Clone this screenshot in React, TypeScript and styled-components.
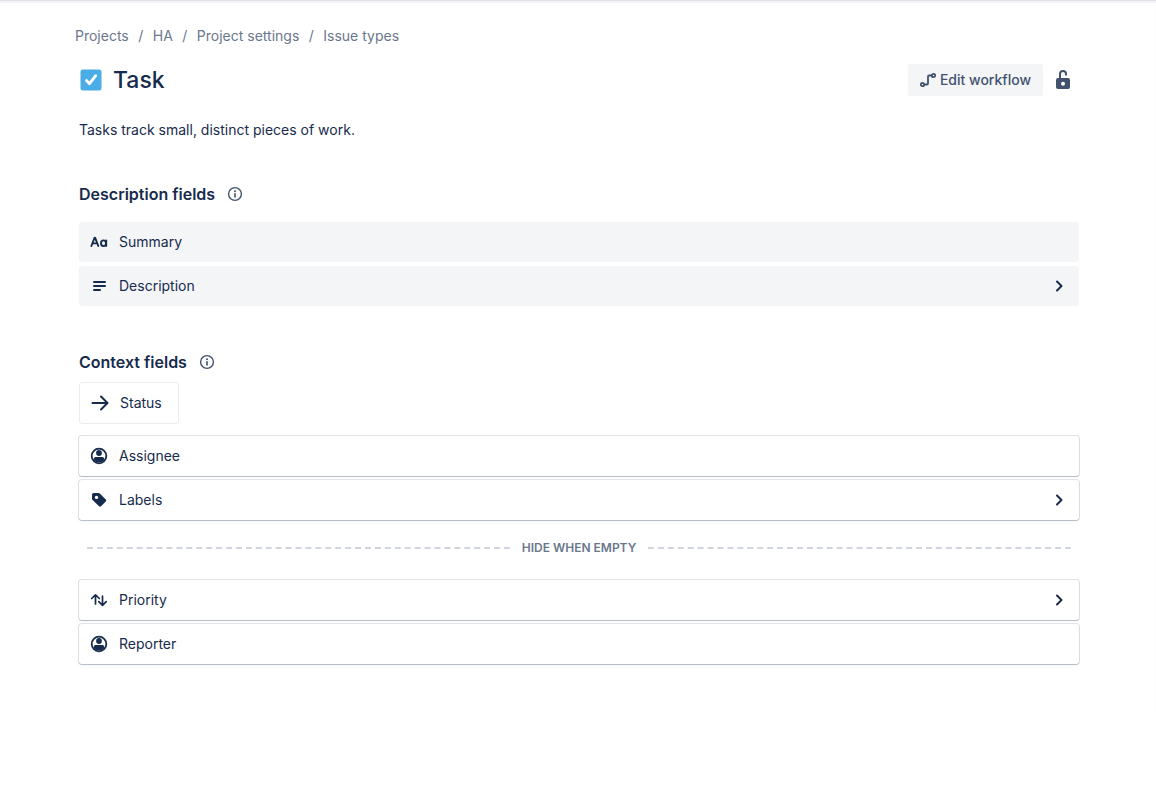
import React from "react";
import styled, { createGlobalStyle } from "styled-components";

const color = {
  text: "#172b4d",
  subtle: "#6b778c",
  icon: "#42526e",
  surface: "#f4f5f7",
  line: "#ebecf0",
};

const GlobalStyle = createGlobalStyle`
  *, *::before, *::after { box-sizing: border-box; }
  body {
    margin: 0;
    background: #fff;
    color: ${color.text};
    font-family: Inter, "Liberation Sans", sans-serif;
    font-size: 14px;
    line-height: 20px;
  }
`;

const Page = styled.main`
  padding: 25px 77px 48px 79px;
  border-top: 1px solid #dfe1e6;
  box-shadow: inset 0 2px 1px rgba(9, 30, 66, 0.06);
`;

const Crumbs = styled.ol`
  display: flex;
  list-style: none;
  margin: 0 0 0 -4px;
  padding: 0;
  color: ${color.subtle};
`;

const Crumb = styled.li`
  &:not(:last-child)::after {
    content: "/";
    display: inline-block;
    width: 24px;
    text-align: center;
  }
`;

const CrumbLink = styled.a`
  color: inherit;
  text-decoration: none;
  &:hover { text-decoration: underline; }
`;

const Header = styled.header`
  display: flex;
  align-items: center;
  justify-content: space-between;
  margin-top: 18px;
`;

const TitleGroup = styled.div`
  display: flex;
  align-items: center;
  gap: 10px;
`;

const Title = styled.h1`
  margin: 0;
  font-size: 23px;
  line-height: 32px;
  font-weight: 500;
`;

const Actions = styled.div`
  display: flex;
  align-items: center;
  gap: 8px;
  padding-right: 4px;
`;

const WorkflowButton = styled.button`
  display: flex;
  align-items: center;
  gap: 4px;
  height: 32px;
  padding: 0 12px;
  border: 0;
  border-radius: 3px;
  background: ${color.surface};
  color: ${color.icon};
  font: inherit;
  font-weight: 500;
  cursor: pointer;
`;

const IconButton = styled.button`
  display: flex;
  align-items: center;
  justify-content: center;
  width: 24px;
  height: 24px;
  padding: 0;
  border: 0;
  background: none;
  color: ${(p) => p.color ?? color.text};
  cursor: pointer;
`;

const Icon = styled.svg`
  display: block;
  flex: none;
`;

const Intro = styled.p`
  margin: 24px 0 0;
`;

const Sections = styled.div`
  display: grid;
  gap: 44px;
  margin-top: 42px;
`;

const SectionHead = styled.div`
  display: flex;
  align-items: center;
  gap: 8px;
`;

const SectionTitle = styled.h2`
  margin: 0;
  font-size: 16px;
  line-height: 20px;
  font-weight: 600;
`;

const FieldList = styled.ul<{ $top: number }>`
  display: grid;
  gap: 4px;
  list-style: none;
  margin: ${(p) => p.$top}px 0 0;
  padding: 0;
`;

const FieldRow = styled.li<{ $raised?: boolean }>`
  display: flex;
  align-items: center;
  gap: 8px;
  height: 40px;
  padding: 0 8px;
  border-radius: 3px;
  background: ${(p) => (p.$raised ? "#fff" : color.surface)};
  box-shadow: ${(p) =>
    p.$raised
      ? "0 1px 1px rgba(9, 30, 66, 0.2), 0 0 0 1px rgba(9, 30, 66, 0.13)"
      : "none"};
`;

const FieldName = styled.span`
  flex: 1;
`;

const StatusField = styled.div`
  display: inline-flex;
  align-items: center;
  gap: 8px;
  height: 42px;
  margin-top: 8px;
  padding: 0 16px 0 8px;
  border: 1px solid ${color.line};
  border-radius: 3px;
`;

const Divider = styled.div`
  display: flex;
  align-items: center;
  gap: 12px;
  margin: 18px 8px 0;
  color: ${color.subtle};
  font-size: 12px;
  line-height: 20px;
  font-weight: 600;
  text-transform: uppercase;

  &::before, &::after {
    content: "";
    flex: 1;
    border-top: 2px dashed #d0d4db;
  }
`;

type IconName =
  | "text" | "paragraph" | "arrow" | "person" | "label" | "priority"
  | "chevron" | "info" | "unlock" | "task";

const stroke = {
  fill: "none",
  stroke: "currentColor",
  strokeWidth: 2,
  strokeLinecap: "round" as const,
  strokeLinejoin: "round" as const,
};

const shapes: Record<IconName, React.ReactNode> = {
  text: (
    <g {...stroke} strokeWidth={1.9}>
      <path d="M4.4 16 7.6 7.7h.5L11.3 16M5.6 13.4h4.5" />
      <ellipse cx="16.500" cy="13.200" rx="2.500" ry="2.800" />
      <path d="M19.200 10.500V16" />
    </g>
  ),
  paragraph: <path d="M7 8h11M7 12h11M7 16h6" {...stroke} />,
  arrow: <path d="M4.5 12H19M13 5.5l6.5 6.5-6.5 6.5" {...stroke} />,
  person: (
    <>
      <circle cx="12" cy="12" r="7.3" {...stroke} strokeWidth={1.8} />
      <circle cx="12" cy="9" r="2.9" fill="currentColor" />
      <path d="M7 14.6c0-1 .7-1.6 1.7-1.6h6.6c1 0 1.7.6 1.7 1.6v1.8a7 7 0 0 1-10 0z" fill="currentColor" />
    </>
  ),
  label: (
    <path
      fillRule="evenodd"
      fill="currentColor"
      d="M5 6.8C5 5.8 5.8 5 6.8 5h4.6c.6 0 1 .2 1.4.6l6 6c.6.6.6 1.3 0 1.900l-4.800 4.800c-.6.6-1.300.6-1.900 0l-6.500-6.200c-.4-.4-.6-.8-.6-1.400zM9.500 7.700a1.700 1.700 0 1 0 0 3.400 1.700 1.700 0 0 0 0-3.400z"
    />
  ),
  priority: (
    <path
      d="M8.500 16V7.200M4.700 10.500l3.800-3.700 3.800 3.700M15.500 8v9M11.800 13.700l3.700 3.700 3.700-3.700"
      {...stroke}
      strokeWidth={1.7}
    />
  ),
  chevron: <path d="m10 7.500 4.500 4.500L10 16.500" {...stroke} />,
  info: (
    <>
      <circle cx="12" cy="12" r="6.4" {...stroke} strokeWidth={1.4} />
      <circle cx="12" cy="9.200" r="1" fill="currentColor" />
      <path d="M12 11.700v3.300" {...stroke} strokeWidth={1.6} />
    </>
  ),
  unlock: (
    <>
      <path
        fillRule="evenodd"
        fill="currentColor"
        d="M7 10h10a2 2 0 0 1 2 2v7a2 2 0 0 1-2 2H7a2 2 0 0 1-2-2v-7a2 2 0 0 1 2-2zM12 13.700a2 2 0 1 0 0 4 2 2 0 0 0 0-4z"
      />
      <path d="M9 11V6a3 3 0 0 1 6 0v.7" {...stroke} />
    </>
  ),
  task: (
    <>
      <rect x="1.500" y="1.500" width="21" height="21" rx="2.500" fill="#4bade8" />
      <path d="m7.500 12.500 3 3.200 6.200-8" {...stroke} stroke="#fff" strokeWidth={2.8} />
    </>
  ),
};

function Glyph({ name }: { name: IconName }) {
  return (
    <Icon width="24" height="24" viewBox="0 0 24 24" aria-hidden="true">
      {shapes[name]}
    </Icon>
  );
}

function WorkflowGlyph() {
  return (
    <Icon width="16" height="16" viewBox="0 0 16 16" aria-hidden="true">
      <g {...stroke} strokeWidth={1.8}>
        <circle cx="2.500" cy="12.500" r="1.700" />
        <circle cx="13.500" cy="3.500" r="1.700" />
        <path d="M4.500 12.500H7a1 1 0 0 0 1-1v-7a1 1 0 0 1 1-1h2.500" />
      </g>
    </Icon>
  );
}

interface FieldProps {
  icon: IconName;
  name: string;
  raised?: boolean;
  expandable?: boolean;
}

function Field({ icon, name, raised, expandable }: FieldProps) {
  return (
    <FieldRow $raised={raised}>
      <Glyph name={icon} />
      <FieldName>{name}</FieldName>
      {expandable && (
        <IconButton type="button" aria-label={`Expand ${name}`}>
          <Glyph name="chevron" />
        </IconButton>
      )}
    </FieldRow>
  );
}

function Heading({ children }: { children: string }) {
  return (
    <SectionHead>
      <SectionTitle>{children}</SectionTitle>
      <IconButton type="button" color={color.icon} aria-label={`About ${children}`}>
        <Glyph name="info" />
      </IconButton>
    </SectionHead>
  );
}

const crumbs = ["Projects", "HA", "Project settings", "Issue types"];

export default function App() {
  return (
    <>
      <GlobalStyle />
      <Page>
        <nav aria-label="Breadcrumb">
          <Crumbs>
            {crumbs.map((label) => (
              <Crumb key={label}>
                <CrumbLink href="#">{label}</CrumbLink>
              </Crumb>
            ))}
          </Crumbs>
        </nav>
        <Header>
          <TitleGroup>
            <Glyph name="task" />
            <Title>Task</Title>
          </TitleGroup>
          <Actions>
            <WorkflowButton type="button">
              <WorkflowGlyph />
              Edit workflow
            </WorkflowButton>
            <IconButton type="button" color={color.icon} aria-label="Permissions">
              <Glyph name="unlock" />
            </IconButton>
          </Actions>
        </Header>
        <Intro>Tasks track small, distinct pieces of work.</Intro>

        <Sections>
          <section>
            <Heading>Description fields</Heading>
            <FieldList $top={16}>
              <Field icon="text" name="Summary" />
              <Field icon="paragraph" name="Description" expandable />
            </FieldList>
          </section>

          <section>
            <Heading>Context fields</Heading>
            <StatusField>
              <Glyph name="arrow" />
              Status
            </StatusField>
            <FieldList $top={12}>
              <Field icon="person" name="Assignee" raised />
              <Field icon="label" name="Labels" raised expandable />
            </FieldList>
            <Divider>Hide when empty</Divider>
            <FieldList $top={22}>
              <Field icon="priority" name="Priority" raised expandable />
              <Field icon="person" name="Reporter" raised />
            </FieldList>
          </section>
        </Sections>
      </Page>
    </>
  );
}
